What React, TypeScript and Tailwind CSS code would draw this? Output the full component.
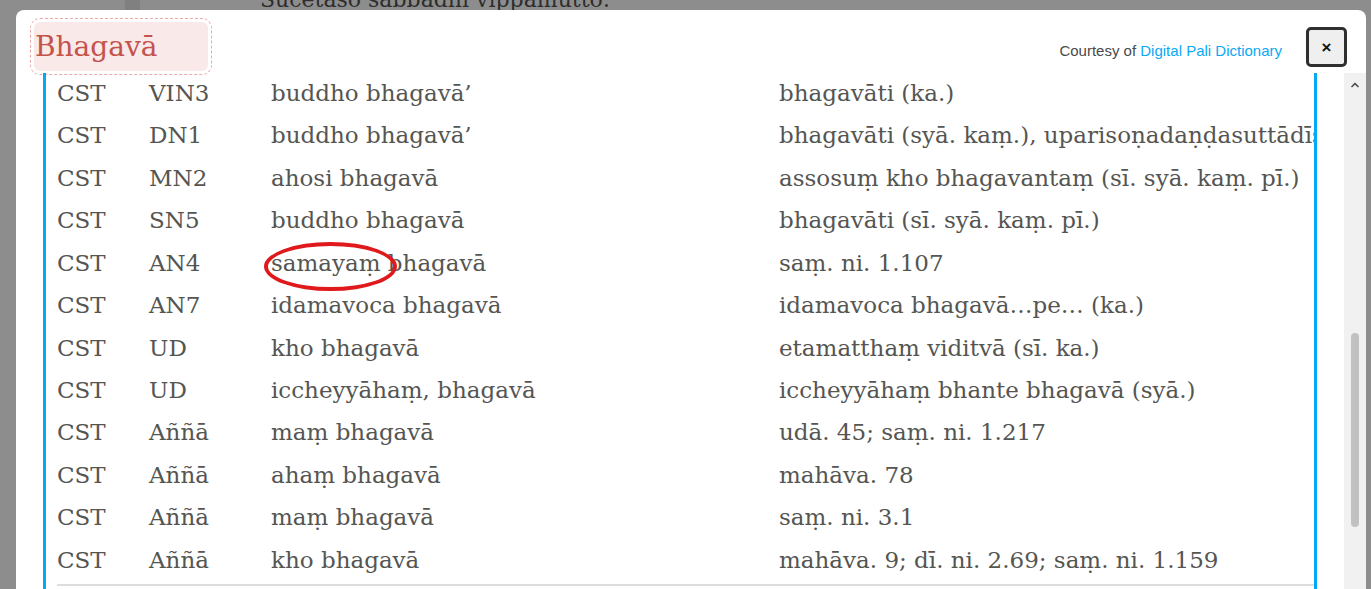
import { ChevronUp } from "lucide-react";

type Row = { src: string; book: string; text: string; note: string };

const rows: Row[] = [
  { src: "CST", book: "VIN3", text: "buddho bhagavā’", note: "bhagavāti (ka.)" },
  { src: "CST", book: "DN1", text: "buddho bhagavā’", note: "bhagavāti (syā. kaṃ.), uparisoṇadaṇḍasuttādīsupi evameva dissati" },
  { src: "CST", book: "MN2", text: "ahosi bhagavā", note: "assosuṃ kho bhagavantaṃ (sī. syā. kaṃ. pī.)" },
  { src: "CST", book: "SN5", text: "buddho bhagavā", note: "bhagavāti (sī. syā. kaṃ. pī.)" },
  { src: "CST", book: "AN4", text: "samayaṃ bhagavā", note: "saṃ. ni. 1.107" },
  { src: "CST", book: "AN7", text: "idamavoca bhagavā", note: "idamavoca bhagavā…pe… (ka.)" },
  { src: "CST", book: "UD", text: "kho bhagavā", note: "etamatthaṃ viditvā (sī. ka.)" },
  { src: "CST", book: "UD", text: "iccheyyāhaṃ, bhagavā", note: "iccheyyāhaṃ bhante bhagavā (syā.)" },
  { src: "CST", book: "Aññā", text: "maṃ bhagavā", note: "udā. 45; saṃ. ni. 1.217" },
  { src: "CST", book: "Aññā", text: "ahaṃ bhagavā", note: "mahāva. 78" },
  { src: "CST", book: "Aññā", text: "maṃ bhagavā", note: "saṃ. ni. 3.1" },
  { src: "CST", book: "Aññā", text: "kho bhagavā", note: "mahāva. 9; dī. ni. 2.69; saṃ. ni. 1.159" },
];

const serif = "font-['DejaVu_Serif','Liberation_Serif',serif]";

export default function App() {
  return (
    <div className="flex h-[589px] w-full flex-col overflow-hidden bg-[#8d8d8d]">
      {/* page behind the overlay */}
      <div className="relative h-[10px] shrink-0 overflow-hidden">
        <div className="absolute left-[125px] top-0 h-[10px] w-[15px] bg-[#808080]" />
        <div
          className={`absolute left-[260px] top-[-17px] whitespace-nowrap text-[22px] text-[#2e2e2e] ${serif}`}
        >
          Sucetaso sabbadhi vippamutto:
        </div>
      </div>

      <div className="flex min-h-0 flex-1 pl-[16px] pr-[5px]">
        <div className="flex min-w-0 flex-1 flex-col rounded-t-[8px] bg-white">
          {/* header */}
          <div className="flex h-[63px] shrink-0 items-start">
            <div className="ml-[18px] mt-[12px] flex h-[49px] w-[174px] items-center rounded-[6px] bg-[#f9e9e9] pl-[1px] outline-1 outline-offset-[3px] outline-dashed outline-[#eba9a9]">
              <span className={`text-[28px] leading-none text-[#c4534c] ${serif}`}>Bhagavā</span>
            </div>
            <div className="ml-auto mt-[33px] font-['Liberation_Sans',Arial,sans-serif] text-[15px] leading-none text-[#4a4a4a]">
              Courtesy of <span className="text-[#0aa8f5]">Digital Pali Dictionary</span>
            </div>
            <button className="ml-[24px] mr-[19px] mt-[17px] flex h-[40px] w-[41px] items-center justify-center rounded-[5px] border-[3px] border-[#2f2f2f] bg-[#efefef] font-['Liberation_Sans',Arial,sans-serif] text-[17px] font-bold leading-none text-[#111]">
              ×
            </button>
          </div>

          {/* scroll area */}
          <div className="flex min-h-0 flex-1">
            <div className="relative mx-[27px] min-w-0 flex-1 overflow-hidden border-x-[3px] border-[#03a9f4] pl-[11px]">
              <div className={`-mt-[1px] text-[23px] text-[#555552] ${serif}`}>
                {rows.map((r, i) => (
                  <div key={i} className="flex h-[42.45px] items-center whitespace-nowrap">
                    <div className="w-[92px] shrink-0">{r.src}</div>
                    <div className="w-[122px] shrink-0">{r.book}</div>
                    <div className="w-[508px] shrink-0">{r.text}</div>
                    <div className="shrink-0">{r.note}</div>
                  </div>
                ))}
                <div className="mt-[3px] border-t-2 border-[#dddddd]" />
              </div>
              {/* annotation */}
              <div className="pointer-events-none absolute left-[218px] top-[169px] h-[49px] w-[133px] rounded-[50%] border-[4px] border-[#e0191c]" />
            </div>
            <div className="flex w-[22px] shrink-0 flex-col items-center bg-[#f1f1f1]">
              <ChevronUp className="mt-[6px] h-[12px] w-[12px] text-[#505050]" strokeWidth={3.5} />
              <div className="mt-[242px] h-[194px] w-[8px] rounded-full bg-[#c1c1c1]" />
            </div>
          </div>
        </div>
      </div>
    </div>
  );
}
